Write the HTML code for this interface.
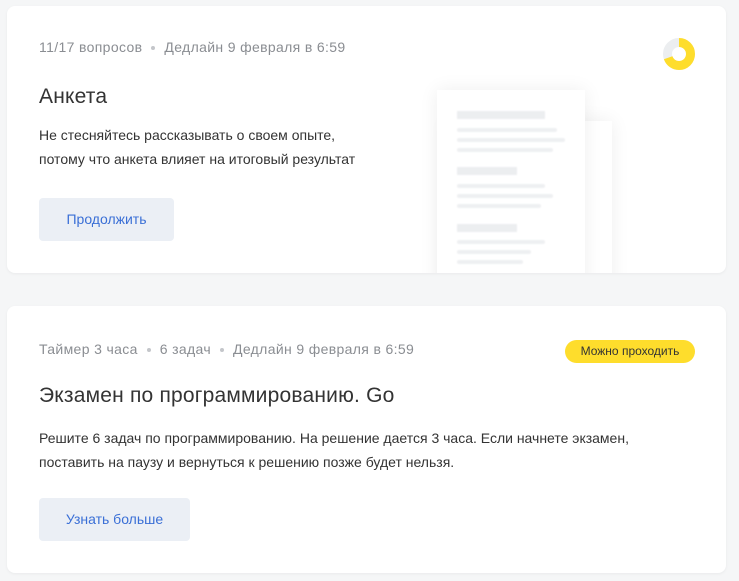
<!DOCTYPE html>
<html><head><meta charset="utf-8"><style>
body{margin:0;width:739px;height:581px;background:#f5f6f7;font-family:"Liberation Sans",Arial,sans-serif;position:relative;overflow:hidden}
.card{position:absolute;left:7px;width:719px;background:#fff;border-radius:8px;box-shadow:0 1px 3px rgba(0,0,0,.05);overflow:hidden}
.meta{position:absolute;left:32px;font-size:14px;color:#8a8d92;letter-spacing:0.35px}
.meta .d{display:inline-block;width:4px;height:4px;border-radius:50%;background:#c4c6ca;margin:0 9px;vertical-align:middle}
.title{position:absolute;left:32px;font-size:21px;color:#333;letter-spacing:0.2px}
.desc{position:absolute;left:32px;font-size:14px;line-height:24px;color:#333}
.btn{position:absolute;left:32px;height:43px;background:#ebeff5;border-radius:4px;color:#3a6fd6;font-size:14px;line-height:43px;text-align:center}
.sheet{position:absolute;background:#fff;box-shadow:0 0 18px rgba(0,0,0,.07)}
.l{position:absolute;height:4px;background:#eef0f2;border-radius:2px;filter:blur(0.8px)}
.h{position:absolute;height:8px;background:#eceef0;filter:blur(0.8px)}
</style></head><body>
<div class="card" style="top:6px;height:267px">
 <div class="meta" style="top:33px">11/17 вопросов<span class="d"></span>Дедлайн 9 февраля в 6:59</div>
 <div class="title" style="top:79px">Анкета</div>
 <div class="desc" style="top:117px">Не стесняйтесь рассказывать о своем опыте,<br>потому что анкета влияет на итоговый результат</div>
 <div class="btn" style="top:192px;width:135px">Продолжить</div>
 <div class="sheet" style="left:440px;top:115px;width:165px;height:170px"></div>
 <div class="sheet" style="left:430px;top:84px;width:148px;height:200px">
  <div class="h" style="left:20px;top:21px;width:88px"></div>
  <div class="l" style="left:20px;top:38px;width:100px"></div>
  <div class="l" style="left:20px;top:48px;width:108px"></div>
  <div class="l" style="left:20px;top:58px;width:96px"></div>
  <div class="h" style="left:20px;top:77px;width:60px"></div>
  <div class="l" style="left:20px;top:94px;width:88px"></div>
  <div class="l" style="left:20px;top:104px;width:96px"></div>
  <div class="l" style="left:20px;top:114px;width:84px"></div>
  <div class="h" style="left:20px;top:134px;width:60px"></div>
  <div class="l" style="left:20px;top:150px;width:88px"></div>
  <div class="l" style="left:20px;top:160px;width:74px"></div>
  <div class="l" style="left:20px;top:170px;width:66px"></div>
 </div>
 <svg style="position:absolute;left:655px;top:31px" width="34" height="34" viewBox="0 0 34 34">
  <circle cx="17" cy="17" r="11.5" fill="none" stroke="#eceef0" stroke-width="9"/>
  <circle cx="17" cy="17" r="11.5" fill="none" stroke="#fedd2c" stroke-width="9" stroke-dasharray="50 100" transform="rotate(-90 17 17)"/>
 </svg>
</div>
<div class="card" style="top:306px;height:267px">
 <div class="meta" style="top:35px">Таймер 3 часа<span class="d"></span>6 задач<span class="d"></span>Дедлайн 9 февраля в 6:59</div>
 <div style="position:absolute;left:558px;top:34px;width:130px;height:23px;border-radius:12px;background:#fedd2c;font-size:12px;line-height:23px;text-align:center;color:#333">Можно проходить</div>
 <div class="title" style="top:78px">Экзамен по программированию. Go</div>
 <div class="desc" style="top:120px">Решите 6 задач по программированию. На решение дается 3 часа. Если начнете экзамен,<br>поставить на паузу и вернуться к решению позже будет нельзя.</div>
 <div class="btn" style="top:192px;width:151px">Узнать больше</div>
</div>
</body></html>
